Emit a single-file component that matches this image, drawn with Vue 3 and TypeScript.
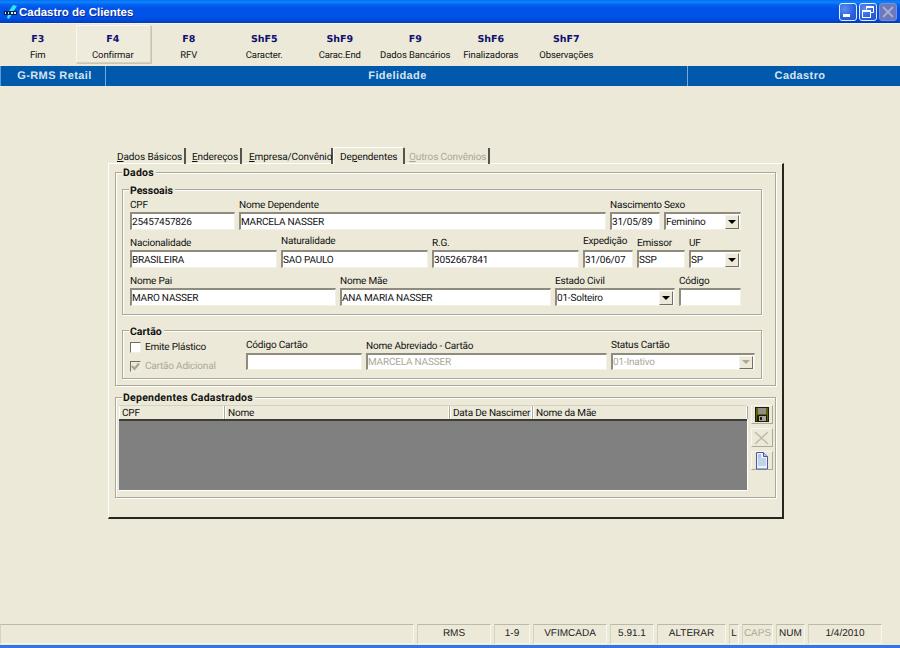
<script setup lang="ts">
interface Field {
  label: string
  value: string
  width: number
  kind?: 'select'
  lift?: number
}

const tools = [
  { key: 'F3', label: 'Fim' },
  { key: 'F4', label: 'Confirmar', hover: true },
  { key: 'F8', label: 'RFV' },
  { key: 'ShF5', label: 'Caracter.' },
  { key: 'ShF9', label: 'Carac.End' },
  { key: 'F9', label: 'Dados Bancários' },
  { key: 'ShF6', label: 'Finalizadoras' },
  { key: 'ShF7', label: 'Observações' },
]

const rows: Field[][] = [
  [
    { label: 'CPF', value: '25457457826', width: 105 },
    { label: 'Nome Dependente', value: 'MARCELA NASSER', width: 367 },
    { label: 'Nascimento', value: '31/05/89', width: 50 },
    { label: 'Sexo', value: 'Feminino', width: 77, kind: 'select' },
  ],
  [
    { label: 'Nacionalidade', value: 'BRASILEIRA', width: 147 },
    { label: 'Naturalidade', value: 'SAO PAULO', width: 147, lift: 2 },
    { label: 'R.G.', value: '3052667841', width: 147 },
    { label: 'Expedição', value: '31/06/07', width: 50, lift: 2 },
    { label: 'Emissor', value: 'SSP', width: 48 },
    { label: 'UF', value: 'SP', width: 52, kind: 'select' },
  ],
  [
    { label: 'Nome Pai', value: 'MARO NASSER', width: 206 },
    { label: 'Nome Mãe', value: 'ANA MARIA NASSER', width: 211 },
    { label: 'Estado Civil', value: '01-Solteiro', width: 120, kind: 'select' },
    { label: 'Código', value: '', width: 62 },
  ],
]

const columns = [
  { label: 'CPF', width: 106 },
  { label: 'Nome', width: 225 },
  { label: 'Data De Nascimer', width: 83 },
  { label: 'Nome da Mãe', width: 215 },
]

const statusCells = [
  { text: '', width: 414 },
  { text: 'RMS', width: 74 },
  { text: '1-9', width: 36 },
  { text: 'VFIMCADA', width: 74 },
  { text: '5.91.1', width: 44 },
  { text: 'ALTERAR', width: 69 },
  { text: 'L', width: 10 },
  { text: 'CAPS', width: 31, off: true },
  { text: 'NUM', width: 29 },
  { text: '1/4/2010', width: 74 },
]
</script>

<template>
  <div class="window">
    <header class="title">
      <svg class="app-icon" width="16" height="16" viewBox="0 0 16 16">
        <path d="M10 1 L14 2 L10 8 L6 15 L4 14 L6 7 Z" fill="#2ce8f4" />
        <rect x="1" y="7" width="13" height="4" fill="#06204a" />
        <path d="M2 8h1v2H2zM5 8h1v2H5zM8 8h2v2H8zM11 8h2v2h-2z" fill="#e8e8e8" />
      </svg>
      <span class="title-text">Cadastro de Clientes</span>
      <div class="win-btns">
        <div class="win-btn">
          <svg width="18" height="18" viewBox="0 0 18 18"><rect x="4" y="11" width="7" height="3" fill="#fff" /></svg>
        </div>
        <div class="win-btn">
          <svg width="18" height="18" viewBox="0 0 18 18" fill="none" stroke="#fff">
            <path d="M7.5 6.5V3.5h7v6h-3" stroke-width="1" />
            <path d="M7.5 4h7" stroke-width="2" />
            <rect x="3.5" y="7.5" width="8" height="7" />
            <path d="M3.5 8h8" stroke-width="2" />
          </svg>
        </div>
        <div class="win-btn off">
          <svg width="18" height="18" viewBox="0 0 18 18"><path d="M4 4l10 10M14 4L4 14" stroke="#a9aec8" stroke-width="2" /></svg>
        </div>
      </div>
    </header>

    <nav class="toolbar">
      <div v-for="t in tools" :key="t.key" class="tool" :class="{ hover: t.hover }">
        <b class="tool-key">{{ t.key }}</b>
        <span class="tool-label">{{ t.label }}</span>
      </div>
    </nav>

    <div class="module-bar">
      <div class="mod mod-a">G-RMS Retail</div>
      <div class="mod mod-b">Fidelidade</div>
      <div class="mod mod-c">Cadastro</div>
    </div>

    <main class="main">
      <div class="tabs">
        <div class="tab tab-1"><u>D</u>ados Básicos</div>
        <div class="tab tab-2"><u>E</u>ndereços</div>
        <div class="tab tab-3"><u>E</u>mpresa/Convênio</div>
        <div class="tab tab-4 active">De<u>p</u>endentes</div>
        <div class="tab tab-5 disabled"><u>O</u>utros Convênios</div>
      </div>

      <section class="panel">
        <div class="group dados">
          <span class="legend legend-outer">Dados</span>

          <div class="group pessoais">
            <span class="legend inner">Pessoais</span>
            <div v-for="(row, i) in rows" :key="i" class="row">
              <div
                v-for="f in row"
                :key="f.label"
                class="field"
                :style="{ width: f.width + 'px' }"
              >
                <label class="lbl" :style="{ marginBottom: (f.lift ?? 0) + 'px' }">{{ f.label }}</label>
                <div class="input" :class="{ select: f.kind === 'select' }">
                  <span class="val">{{ f.value }}</span>
                  <span v-if="f.kind === 'select'" class="arrow"><i></i></span>
                </div>
              </div>
            </div>
          </div>

          <div class="group cartao">
            <span class="legend inner">Cartão</span>
            <div class="checks">
              <div class="check-row">
                <span class="check"></span>
                <span>Emite Plástico</span>
              </div>
              <div class="check-row off">
                <span class="check checked">
                  <svg width="11" height="11" viewBox="0 0 11 11"><path d="M2 5l2.500 3L9 2.500" fill="none" stroke="#a5a293" stroke-width="2" /></svg>
                </span>
                <span>Cartão Adicional</span>
              </div>
            </div>
            <div class="field f-code">
              <label class="lbl lift">Código Cartão</label>
              <div class="input short"></div>
            </div>
            <div class="field f-name">
              <label class="lbl">Nome Abreviado - Cartão</label>
              <div class="input short off"><span class="val">MARCELA NASSER</span></div>
            </div>
            <div class="field f-status">
              <label class="lbl lift">Status Cartão</label>
              <div class="input short select off">
                <span class="val">01-Inativo</span>
                <span class="arrow off"><i></i></span>
              </div>
            </div>
          </div>
        </div>

        <div class="group dependentes">
          <span class="legend legend-outer">Dependentes Cadastrados</span>
          <div class="grid">
            <div class="grid-head">
              <div
                v-for="c in columns"
                :key="c.label"
                class="col"
                :style="{ width: c.width + 'px' }"
              >{{ c.label }}</div>
            </div>
            <div class="grid-body"></div>
          </div>
          <div class="side">
            <button class="side-btn" type="button" aria-label="Salvar">
              <svg width="16" height="16" viewBox="0 0 16 16">
                <rect x="1" y="0" width="14" height="15" fill="#1c1c08" />
                <rect x="2" y="1" width="12" height="13" fill="#5f5f10" />
                <rect x="4" y="1" width="8" height="6" fill="#8f8f88" />
                <rect x="3" y="8" width="10" height="6" fill="#1c1c08" />
                <rect x="5" y="9" width="7" height="5" fill="#a8a8a0" />
                <rect x="6" y="10" width="2" height="3" fill="#1c1c08" />
              </svg>
            </button>
            <button class="side-btn" type="button" aria-label="Excluir">
              <svg width="16" height="16" viewBox="0 0 16 16">
                <path d="M1 2l13 12M14 2L1 14" stroke="#bdbaab" stroke-width="1.500" fill="none" />
              </svg>
            </button>
            <button class="side-btn" type="button" aria-label="Novo">
              <svg width="16" height="18" viewBox="0 0 16 18">
                <path d="M2.500 .5h7l4 4v12.500h-11z" fill="#eef1fb" stroke="#4a5aa0" stroke-width="1" />
                <path d="M9.500 .5v4h4" fill="#b9c3ec" stroke="#4a5aa0" stroke-width="1" />
                <path d="M4 7h8M4 9h8M4 11h8M4 13h8" stroke="#8fb8dc" stroke-width="1" />
                <path d="M4 3h3M4 5h3" stroke="#8a94c8" stroke-width="1" />
              </svg>
            </button>
          </div>
        </div>
      </section>
    </main>

    <footer class="status">
      <div
        v-for="(c, i) in statusCells"
        :key="i"
        class="cell"
        :class="{ off: c.off }"
        :style="{ width: c.width + 'px' }"
      >{{ c.text }}</div>
    </footer>
  </div>
</template>

<style>
html, body { margin: 0; padding: 0; overflow: hidden; }
</style>

<style scoped>
* { box-sizing: border-box; }

.window {
  width: 900px;
  height: 648px;
  display: flex;
  flex-direction: column;
  background: #ece9d8;
  border-bottom: 3px solid #2f78e0;
  font-family: "Roboto", "Liberation Sans", sans-serif;
  font-size: 10px;
  text-rendering: geometricPrecision;
  letter-spacing: -.2px;
  color: #111;
  overflow: hidden;
}

.title {
  height: 23px;
  flex: none;
  display: flex;
  align-items: center;
  padding: 0 3px;
  background: linear-gradient(#0a6af0 0, #0a86ff 2px, #0460ee 5px, #0152e6 9px, #0152e8 17px, #0146d0 21px, #013cb8 23px);
  color: #fff;
}
.app-icon { flex: none; }
.title-text {
  padding-top: 2px;
  font-family: "Liberation Sans", sans-serif;
  font-size: 11.500px;
  font-weight: 700;
  letter-spacing: 0;
  text-shadow: 1px 1px 0 #0f2a8a;
}
.win-btns { margin-left: auto; display: flex; gap: 2px; }
.win-btn {
  width: 18px;
  height: 18px;
  border: 1px solid #e4ecfb;
  border-radius: 3px;
  background: radial-gradient(circle at 30% 30%, #5b8cf0, #2a5fdc 60%, #2353cc);
  display: flex;
  align-items: center;
  justify-content: center;
}
.win-btn svg { flex: none; margin: -1px; }
.win-btn.off {
  border-color: #7f8fc8;
  background: #6a78c0;
}

.toolbar {
  height: 43px;
  flex: none;
  display: grid;
  grid-template-columns: repeat(8, 75.5px);
  padding: 1px 0 4px;
  border-top: 1px solid #f6f4ea;
}
.tool {
  display: flex;
  flex-direction: column;
  align-items: center;
  padding-top: 8px;
  white-space: nowrap;
}
.tool.hover {
  background: #eeebdc;
  box-shadow: inset 1px 1px 0 #f8f7ef, 1px 1px 0 #c9c5b2;
  border-right: 1px solid #d6d2c0;
  border-bottom: 1px solid #d6d2c0;
}
.tool-key {
  color: #10106e;
  font-family: "DejaVu Sans", sans-serif;
  font-size: 9.500px;
  letter-spacing: 0;
  line-height: 14px;
}
.tool-label {
  margin-top: 2px;
  line-height: 13px;
  font-size: 9.500px;
  letter-spacing: -.1px;
}

.module-bar {
  height: 20px;
  flex: none;
  display: flex;
  background: #0059ab;
  color: #d8e3ee;
  font-family: "Liberation Sans", sans-serif;
  font-size: 11px;
  font-weight: 700;
  letter-spacing: .4px;
  line-height: 21px;
}
.mod { text-align: center; }
.mod-a { width: 106px; border-left: 1px solid #5f9ad4; border-right: 1px solid #7aa8d8; padding-left: 3px; }
.mod-b { width: 581px; padding-left: 2px; }
.mod-c { flex: 1; border-left: 1px solid #7aa8d8; padding-left: 12px; }

.main {
  flex: 1;
  padding: 61px 0 0 108px;
}

.tabs {
  height: 17px;
  display: flex;
  position: relative;
  z-index: 1;
  margin-bottom: -1px;
  padding-left: 3px;
  letter-spacing: -.1px;
}
.tab {
  height: 16px;
  margin-top: 1px;
  line-height: 19px;
  padding-left: 6px;
  text-align: left;
  border-right: 2px solid #56544a;
  white-space: nowrap;
}
.tab-1 { width: 75px; }
.tab-2 { width: 56px; }
.tab-3 { width: 91px; padding-left: 7px; }
.tab-4 {
  width: 72px;
  height: 17px;
  margin-top: 0;
  padding-left: 6px;
  background: #ece9d8;
  border-top: 1px solid #fff;
  border-left: 1px solid #fff;
  border-radius: 2px 2px 0 0;
}
.tab-5 { width: 85px; padding-left: 4px; color: #aca899; }

.panel {
  width: 676px;
  height: 356px;
  border-top: 1px solid #fff;
  border-left: 1px solid #fff;
  border-right: 2px solid #26261f;
  border-bottom: 2px solid #26261f;
  padding: 8px 6px 0;
}

.group {
  position: relative;
  border: 1px solid #aca899;
  box-shadow: inset 1px 1px 0 #fff, 1px 1px 0 #fff;
}
.legend {
  position: absolute;
  top: -7px;
  left: 6px;
  padding: 0 2px 0 1px;
  background: #ece9d8;
  line-height: 13px;
  font-weight: 700;
  font-size: 10.500px;
  letter-spacing: 0;
}
.legend.inner { top: -6px; }
.legend-outer { letter-spacing: .25px; }

.dados {
  width: 661px;
  height: 214px;
  padding: 16px 13px 0 6px;
}
.pessoais {
  width: 640px;
  height: 126px;
  padding: 2px 0 0 7px;
}
.row {
  display: flex;
  gap: 4px;
  height: 38px;
  align-items: flex-end;
}
.field { display: flex; flex-direction: column; flex: none; }
.lbl { line-height: 13px; white-space: nowrap; }
.input {
  height: 18px;
  background: #fff;
  border: 2px solid;
  border-color: #8f8c7e #f3f1e6 #f3f1e6 #8f8c7e;
  border-width: 2px 1px 1px 2px;
  padding: 1px 0 0;
  line-height: 15px;
  display: flex;
  align-items: center;
  justify-content: space-between;
  white-space: nowrap;
  overflow: hidden;
}
.input.short { height: 17px; padding-top: 0; }
.input.off { color: #aca899; }
.arrow {
  width: 14px;
  height: 14px;
  flex: none;
  margin: -1px 1px 0 0;
  background: #ece9d8;
  border: 1px solid;
  border-color: #f6f4ea #716f64 #716f64 #f6f4ea;
  display: flex;
  align-items: center;
  justify-content: center;
}
.input.short .arrow { height: 13px; margin-top: 0; }
.arrow i {
  width: 0;
  height: 0;
  border: 4px solid transparent;
  border-top-color: #000;
  border-bottom-width: 0;
}
.arrow.off i { border-top-color: #aca899; }

.cartao {
  width: 640px;
  height: 49px;
  margin-top: 15px;
  padding-left: 7px;
  display: flex;
  align-items: flex-end;
  padding-bottom: 8px;
}
.checks {
  width: 116px;
  flex: none;
  align-self: flex-start;
  margin-top: 7px;
}
.check-row {
  display: flex;
  align-items: center;
  gap: 4px;
  height: 19px;
}
.check-row.off { color: #aca899; }
.check {
  width: 11px;
  height: 11px;
  background: #fff;
  border: 1px solid;
  border-color: #716f64 #f1efe2 #f1efe2 #716f64;
  display: block;
  position: relative;
}
.check.checked { background: #ece9d8; }
.check svg { position: absolute; left: -1px; top: -1px; }
.f-code { width: 116px; margin-right: 4px; }
.f-name { width: 241px; margin-right: 4px; }
.f-status { width: 144px; }
.lift { margin-bottom: 1px; }

.dependentes {
  width: 661px;
  height: 101px;
  margin-top: 11px;
  padding: 7px 2px 0 3px;
  display: flex;
  gap: 3px;
}
.grid {
  width: 629px;
  height: 86px;
  flex: none;
  display: flex;
  flex-direction: column;
  border-right: 1px solid #fff;
  border-bottom: 1px solid #fff;
}
.grid-head {
  height: 16px;
  flex: none;
  display: flex;
  border-top: 1px solid #d6d2c0;
  border-bottom: 2px solid #3c3c38;
}
.col {
  flex: none;
  line-height: 15px;
  padding-left: 3px;
  border-right: 1px solid #aca899;
  box-shadow: inset -1px 0 0 #fff, inset 1px 0 0 #fff;
  white-space: nowrap;
  overflow: hidden;
}
.grid-body { flex: 1; background: #808080; }

.side { display: flex; flex-direction: column; }
.side-btn {
  width: 22px;
  height: 19px;
  margin-bottom: 4px;
  padding: 0;
  background: #ece9d8;
  border: 1px solid;
  border-color: #f8f7ef #aca899 #aca899 #f8f7ef;
  display: flex;
  align-items: center;
  justify-content: center;
}

.status {
  height: 21px;
  flex: none;
  display: flex;
  gap: 3px;
}
.cell {
  flex: none;
  height: 20px;
  border: 1px solid;
  border-color: #bdb9a8 #f8f7ef #f8f7ef #d6d2c0;
  line-height: 18px;
  text-align: center;
  font-family: "Liberation Sans", sans-serif;
  font-size: 10px;
  letter-spacing: 0;
  color: #222;
  overflow: hidden;
}
.cell.off { color: #aca899; }
</style>
